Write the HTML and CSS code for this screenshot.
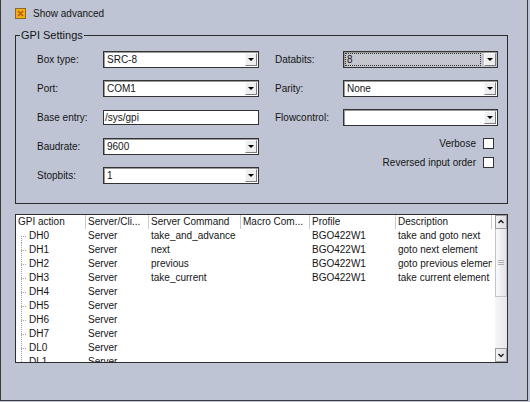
FILE: index.html
```html
<!DOCTYPE html>
<html>
<head>
<meta charset="utf-8">
<link rel="stylesheet" href="styles.css">
</head>
<body>
<div class="window">
  <div class="adv">
    <span class="cb-adv"><svg width="11" height="11" viewBox="0 0 11 11"><rect x="0.5" y="0.5" width="10" height="10" fill="#f2ae12" stroke="#8a6a2a"/><path d="M3 3 L8 8 M8 3 L3 8" stroke="#c05800" stroke-width="1.6"/></svg></span>
    <span>Show advanced</span>
  </div>

  <fieldset class="gpi">
    <legend>GPI Settings</legend>
    <div class="cols">
      <div class="col col-left">
        <div class="row"><span class="lbl">Box type:</span><div class="select"><span class="val">SRC-8</span><span class="btn"></span></div></div>
        <div class="row"><span class="lbl">Port:</span><div class="select"><span class="val">COM1</span><span class="btn"></span></div></div>
        <div class="row"><span class="lbl">Base entry:</span><div class="input">/sys/gpi</div></div>
        <div class="row"><span class="lbl">Baudrate:</span><div class="select"><span class="val">9600</span><span class="btn"></span></div></div>
        <div class="row"><span class="lbl">Stopbits:</span><div class="select"><span class="val">1</span><span class="btn"></span></div></div>
      </div>
      <div class="col col-right">
        <div class="row"><span class="lbl">Databits:</span><div class="select select-disabled"><span class="val val-focus">8</span><span class="btn"></span></div></div>
        <div class="row"><span class="lbl">Parity:</span><div class="select"><span class="val">None</span><span class="btn"></span></div></div>
        <div class="row"><span class="lbl">Flowcontrol:</span><div class="select"><span class="val"></span><span class="btn"></span></div></div>
        <div class="row row-chk row-first-chk"><span>Verbose</span><span class="cb"></span></div>
        <div class="row row-chk"><span>Reversed input order</span><span class="cb"></span></div>
      </div>
    </div>
  </fieldset>

  <div class="grid">
    <div class="grid-main">
      <div class="hdr">
        <span class="c c1">GPI action</span>
        <span class="c c2">Server/Cli...</span>
        <span class="c c3">Server Command</span>
        <span class="c c4">Macro Com...</span>
        <span class="c c5">Profile</span>
        <span class="c c6">Description</span>
      </div>
      <div class="trow"><span class="c c1"><span class="branch branch-first"></span>DH0</span><span class="c c2">Server</span><span class="c c3">take_and_advance</span><span class="c c4"></span><span class="c c5">BGO422W1</span><span class="c c6">take and goto next</span></div>
      <div class="trow"><span class="c c1"><span class="branch"></span>DH1</span><span class="c c2">Server</span><span class="c c3">next</span><span class="c c4"></span><span class="c c5">BGO422W1</span><span class="c c6">goto next element</span></div>
      <div class="trow"><span class="c c1"><span class="branch"></span>DH2</span><span class="c c2">Server</span><span class="c c3">previous</span><span class="c c4"></span><span class="c c5">BGO422W1</span><span class="c c6">goto previous element</span></div>
      <div class="trow"><span class="c c1"><span class="branch"></span>DH3</span><span class="c c2">Server</span><span class="c c3">take_current</span><span class="c c4"></span><span class="c c5">BGO422W1</span><span class="c c6">take current element</span></div>
      <div class="trow"><span class="c c1"><span class="branch"></span>DH4</span><span class="c c2">Server</span></div>
      <div class="trow"><span class="c c1"><span class="branch"></span>DH5</span><span class="c c2">Server</span></div>
      <div class="trow"><span class="c c1"><span class="branch"></span>DH6</span><span class="c c2">Server</span></div>
      <div class="trow"><span class="c c1"><span class="branch"></span>DH7</span><span class="c c2">Server</span></div>
      <div class="trow"><span class="c c1"><span class="branch"></span>DL0</span><span class="c c2">Server</span></div>
      <div class="trow"><span class="c c1"><span class="branch"></span>DL1</span><span class="c c2">Server</span></div>
    </div>
    <div class="vscroll">
      <div class="sbtn"><svg width="10" height="12" viewBox="0 0 10 12"><path d="M2.5 7 L5 4.5 L7.5 7" fill="none" stroke="#222" stroke-width="1.5"/></svg></div>
      <div class="thumb"><span class="grip"></span></div>
      <div class="track"></div>
      <div class="sbtn"><svg width="10" height="12" viewBox="0 0 10 12"><path d="M2.5 5 L5 7.5 L7.5 5" fill="none" stroke="#222" stroke-width="1.5"/></svg></div>
    </div>
  </div>
</div>
</body>
</html>
```

FILE: styles.css
```css
html, body {
  margin: 0;
  padding: 0;
  background: #bec4d3;
}

body {
  font-family: "Liberation Sans", Arial, sans-serif;
  font-size: 10px;
  color: #151515;
}

.window {
  width: 528px;
  height: 401px;
  box-sizing: border-box;
  border-left: 1px solid #3a3a3a;
  border-right: 1px solid #3a3a3a;
  border-bottom: 1px solid #3a3a3a;
  padding: 8px 0 0 14px;
}

.adv {
  display: flex;
  align-items: center;
  height: 11px;
  gap: 7px;
}

.cb-adv {
  display: block;
  width: 11px;
  height: 11px;
}
.cb-adv svg { display: block; }

.gpi {
  width: 493px;
  box-sizing: border-box;
  margin: 10px 0 0 0;
  padding: 0;
  border: 1px solid #2a2a2a;
  min-width: 0;
}

.gpi legend {
  font-size: 11px;
  line-height: 13px;
  padding: 0 1px;
  margin-left: 4px;
}

.cols {
  display: flex;
  gap: 16px;
  padding: 3px 0 13px 21px;
}

.col {
  display: flex;
  flex-direction: column;
}

.col-left { width: 222px; }
.col-right { width: 223px; }

.row {
  display: flex;
  align-items: center;
  height: 29px;
}

.lbl { flex: none; }
.col-left .lbl { width: 66px; }
.col-right .lbl { width: 68px; }

.select {
  width: 156px;
  height: 17px;
  box-sizing: border-box;
  border: 1px solid #333;
  box-shadow: inset 1px 1px 0 #9a9a9a;
  background: #fff;
  display: flex;
  align-items: center;
}
.col-right .select { width: 155px; }

.val {
  flex: 1;
  padding-left: 3px;
  white-space: nowrap;
}

.select-disabled {
  background: #c6c7ce;
}

.val-focus {
  flex: 1;
  height: 11px;
  line-height: 11px;
  margin: 0 1px 0 1px;
  padding-left: 1px;
  border: 1px dotted #333;
}

.btn {
  flex: none;
  width: 12px;
  height: 13px;
  box-sizing: border-box;
  margin: 0 1px 0 2px;
  background: #eeeef0;
  border: 1px solid;
  border-color: #fafafa #7c7c80 #7c7c80 #fafafa;
  display: flex;
  align-items: center;
  justify-content: center;
}
.btn::after {
  content: "";
  display: block;
  width: 0;
  height: 0;
  border-left: 3px solid transparent;
  border-right: 3px solid transparent;
  border-top: 3px solid #000;
}

.input {
  width: 156px;
  height: 15px;
  box-sizing: border-box;
  border: 1px solid #333;
  background: #fff;
  padding-left: 1px;
  line-height: 13px;
}

.row-chk {
  height: 19px;
  justify-content: flex-end;
  gap: 7px;
  padding-right: 4px;
}
.row-first-chk { margin-top: 2px; }

.cb {
  display: block;
  width: 11px;
  height: 11px;
  box-sizing: border-box;
  border: 1px solid #333;
  background: #fff;
}

.grid {
  width: 493px;
  height: 149px;
  box-sizing: border-box;
  margin-top: 10px;
  border: 1px solid #2e2e2e;
  background: #fff;
  display: flex;
  overflow: hidden;
}

.grid-main {
  width: 479px;
  overflow: hidden;
}

.hdr, .trow {
  display: flex;
  height: 14px;
  line-height: 14px;
  white-space: nowrap;
}

.c {
  flex: none;
  display: block;
  overflow: hidden;
  box-sizing: border-box;
  padding-left: 3px;
}
.c1 { width: 69px; padding-left: 2px; }
.c2 { width: 63px; }
.c3 { width: 92px; }
.c4 { width: 69px; }
.c5 { width: 86px; }
.c6 { width: 97px; }

.hdr .c2, .hdr .c3, .hdr .c4, .hdr .c5, .hdr .c6 {
  border-left: 1px solid #cacaca;
  padding-left: 2px;
}
.hdr .c6 { border-right: 1px solid #cacaca; }

.trow .c1 {
  display: flex;
  padding-left: 5px;
}

.branch {
  flex: none;
  width: 6px;
  height: 14px;
  margin-right: 2px;
  background:
    repeating-linear-gradient(to bottom, #a0a0a0 0 1px, transparent 1px 2px) 0 0 / 1px 100% no-repeat,
    repeating-linear-gradient(to right, #a0a0a0 0 1px, transparent 1px 2px) 0 7px / 6px 1px no-repeat;
}
.branch-first {
  background:
    repeating-linear-gradient(to bottom, #a0a0a0 0 1px, transparent 1px 2px) 0 7px / 1px 7px no-repeat,
    repeating-linear-gradient(to right, #a0a0a0 0 1px, transparent 1px 2px) 0 7px / 6px 1px no-repeat;
}

.vscroll {
  width: 12px;
  margin-left: auto;
  display: flex;
  flex-direction: column;
  background: linear-gradient(to right, #f6f6f8, #e6e6ec);
}

.sbtn {
  height: 14px;
  box-sizing: border-box;
  border: 1px solid #9c9ca4;
  background: linear-gradient(to right, #f4f4f6, #dcdce2);
  display: flex;
  align-items: center;
  justify-content: center;
}
.sbtn svg { display: block; }

.thumb {
  height: 68px;
  box-sizing: border-box;
  border: 1px solid #c2c2ca;
  border-top: none;
  background: linear-gradient(to right, #fafafb, #e2e2e8);
  display: flex;
  align-items: center;
  justify-content: center;
}

.grip {
  display: block;
  width: 6px;
  height: 5px;
  background: repeating-linear-gradient(to bottom, #b0b0b8 0 1px, transparent 1px 2px);
}

.track { flex: 1; }
```
